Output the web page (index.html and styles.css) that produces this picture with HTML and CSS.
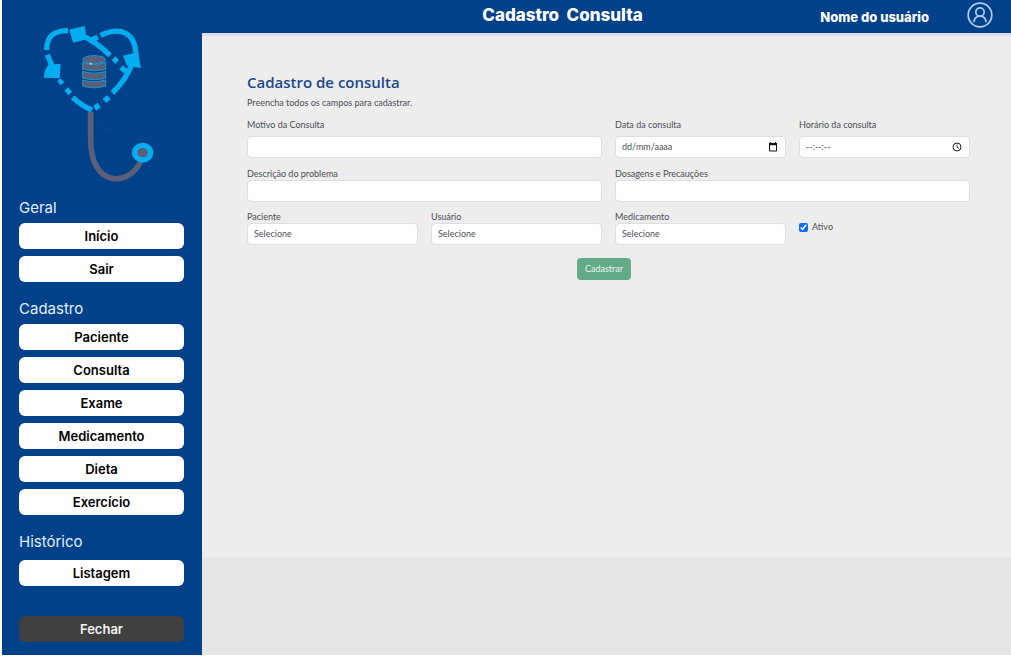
FILE: index.html
```html
<!DOCTYPE html>
<html lang="pt-BR">
<head>
<meta charset="utf-8">
<meta name="viewport" content="width=device-width, initial-scale=1">
<title>Cadastro Consulta</title>
<link rel="stylesheet" href="styles.css">
</head>
<body>
<div class="app">
  <aside class="sidebar">
    <svg class="logo" viewBox="-3 0 495 540" role="img" aria-label="Logotipo">
      <g fill="none" stroke="#03adef" stroke-width="16">
        <path d="M80 120C80 80 98 62 144 62"/>
        <path d="M82 134L98 172"/>
        <path d="M180 73C212 88 244 110 270 136"/>
        <path d="M207 94L233 81"/>
        <path d="M242 76C300 48 348 66 348 140"/>
        <path d="M338 156C325 195 303 224 277 249"/>
        <path d="M303 172L318 184"/>
        <path d="M158 262C174 277 192 290 216 300"/>
      </g>
      <g fill="#03adef">
        <path d="M147 59L194 48 200 88 160 98Z"/>
        <path d="M309 137L354 127 363 174 321 167Z"/>
        <path d="M76 178L86 163 122 162 119 205 71 203Z"/>
        <path d="M275 151L286 139 297 150 286 162Z"/>
        <path d="M112 214L122 205 133 217 122 226Z"/>
        <path d="M133 242L144 232 156 245 146 256Z"/>
        <path d="M220 289L232 278 243 291 229 302Z"/>
        <path d="M248 267L261 256 272 268 259 279Z"/>
      </g>
      <g fill="#5b6078" stroke="#1997cd" stroke-width="3">
        <path d="M188 210Q222 220 257 210V228Q222 239 188 228Z"/>
        <path d="M188 184Q222 195 257 184V204Q222 214 188 204Z"/>
        <path d="M188 157Q222 170 257 157V178Q222 187 188 178Z"/>
        <ellipse cx="222" cy="149" rx="34" ry="12"/>
      </g>
      <circle cx="212" cy="161" r="3" fill="#b9efff"/>
      <path d="M212 306V390C212 535 330 530 362 453" fill="none" stroke="#5b6078" stroke-width="17"/>
      <ellipse cx="368" cy="428" rx="24" ry="22" fill="#5b6078" stroke="#03adef" stroke-width="16"/>
      <path d="M236 344V356M255 350L257 360M267 356L271 364" fill="none" stroke="#174c91" stroke-width="3"/>
    </svg>
    <nav class="menu" aria-label="Principal">
      <section class="group">
        <h2 class="group-title">Geral</h2>
        <button class="item" type="button">Início</button>
        <button class="item" type="button">Sair</button>
      </section>
      <section class="group">
        <h2 class="group-title">Cadastro</h2>
        <button class="item" type="button">Paciente</button>
        <button class="item" type="button">Consulta</button>
        <button class="item" type="button">Exame</button>
        <button class="item" type="button">Medicamento</button>
        <button class="item" type="button">Dieta</button>
        <button class="item" type="button">Exercício</button>
      </section>
      <section class="group group-history">
        <h2 class="group-title">Histórico</h2>
        <button class="item" type="button">Listagem</button>
      </section>
    </nav>
    <button class="item item-close" type="button">Fechar</button>
  </aside>
  <div class="page">
    <header class="topbar">
      <h1 class="page-title">Cadastro&nbsp; Consulta</h1>
      <div class="user">
        <span class="user-name">Nome do usuário</span>
        <svg class="avatar" viewBox="0 0 26 26" fill="none" stroke="#b3ccf2" stroke-width="1.7" aria-hidden="true">
          <circle cx="13" cy="13" r="11.8"/>
          <circle cx="13" cy="10" r="4.2"/>
          <path d="M6.8 20.2C7.4 16.5 9.5 14.2 13 14.2S18.600 16.500 19.200 20.200"/>
        </svg>
      </div>
    </header>
    <main class="content">
      <form class="form">
        <h2 class="form-title">Cadastro de consulta</h2>
        <p class="form-hint">Preencha todos os campos para cadastrar.</p>
        <div class="row row-first">
          <div class="field wide">
            <label for="motivo">Motivo da Consulta</label>
            <input class="control" id="motivo" type="text">
          </div>
          <div class="field">
            <label for="data">Data da consulta</label>
            <div class="control picker">
              <input class="picker-input" id="data" type="text" placeholder="dd/mm/aaaa">
              <svg class="picker-icon" viewBox="0 0 10 10" aria-hidden="true">
                <path d="M1.500 1.500H8.500V9H1.500Z" fill="none" stroke="#111"/>
                <path d="M1 1H9V3.200H1ZM2.200 0H3.200V2H2.200ZM6.800 0H7.800V2H6.800Z" fill="#111"/>
              </svg>
            </div>
          </div>
          <div class="field">
            <label for="hora">Horário da consulta</label>
            <div class="control picker">
              <input class="picker-input" id="hora" type="text" placeholder="--:--:--">
              <svg class="picker-icon" viewBox="0 0 10 10" fill="none" stroke="#222" aria-hidden="true">
                <circle cx="5" cy="5" r="4"/>
                <path d="M5 2.500V5.200L6.800 6.300" stroke-width=".9"/>
              </svg>
            </div>
          </div>
        </div>
        <div class="row">
          <div class="field wide">
            <label for="descricao">Descrição do problema</label>
            <input class="control" id="descricao" type="text">
          </div>
          <div class="field wide">
            <label for="dosagens">Dosagens e Precauções</label>
            <input class="control" id="dosagens" type="text">
          </div>
        </div>
        <div class="row row-last">
          <div class="field">
            <label for="paciente">Paciente</label>
            <select class="control" id="paciente"><option>Selecione</option></select>
          </div>
          <div class="field">
            <label for="usuario">Usuário</label>
            <select class="control" id="usuario"><option>Selecione</option></select>
          </div>
          <div class="field">
            <label for="medicamento">Medicamento</label>
            <select class="control" id="medicamento"><option>Selecione</option></select>
          </div>
          <div class="check">
            <input class="check-box" id="ativo" type="checkbox" checked>
            <label for="ativo">Ativo</label>
          </div>
        </div>
        <button class="submit" type="submit">Cadastrar</button>
      </form>
    </main>
    <footer class="footer"></footer>
  </div>
</div>
</body>
</html>
```
FILE: styles.css
```css
* {
  box-sizing: border-box;
}

body {
  margin: 0;
  background: #fff;
  font-family: Inter, "Liberation Sans", sans-serif;
}

h1, h2, p {
  margin: 0;
}

.app {
  display: grid;
  grid-template-columns: 200px 1fr;
  min-height: 100vh;
  padding: 0 0 1px 2px;
}

.sidebar {
  display: flex;
  flex-direction: column;
  padding: 10px 18px 13px 17px;
  background: #004189;
}

.logo {
  display: block;
  width: 100%;
}

.menu {
  display: flex;
  flex-direction: column;
  gap: 19px;
  padding-top: 10px;
}

.group {
  display: flex;
  flex-direction: column;
  gap: 7px;
}

.group-title {
  color: #e6effb;
  font-size: 15px;
  font-weight: 400;
  line-height: 16px;
}

.group-history {
  gap: 10px;
}

.item {
  height: 26px;
  padding: 0;
  border: 0;
  border-radius: 6px;
  background: #fff;
  color: #000;
  font: 600 13px/26px Inter, "Liberation Sans", sans-serif;
}

.item-close {
  margin-top: auto;
  background: #404040;
  color: #f2f2f2;
}

.page {
  display: flex;
  flex-direction: column;
}

.topbar {
  display: grid;
  grid-template-columns: 1fr auto 1fr;
  align-items: center;
  height: 33px;
  padding: 0 18px 3px 0;
  background: #004189;
  color: #fff;
}

.page-title {
  grid-column: 2;
  padding-right: 70px;
  font-size: 17px;
  font-weight: 800;
  line-height: 20px;
}

.user {
  display: flex;
  align-items: center;
  justify-content: flex-end;
  gap: 38px;
}

.user-name {
  padding-top: 3px;
  font-size: 13px;
  font-weight: 800;
  line-height: 16px;
  white-space: nowrap;
}

.avatar {
  width: 26px;
  height: 26px;
}

.content {
  flex: 1;
  padding: 36px 41px 0 45px;
  border-top: 3px solid #dcdde8;
  background: #ededed;
}

.footer {
  height: 98px;
  background: #e6e6e6;
}

.form {
  display: flex;
  flex-direction: column;
  color: #4b4f56;
  font: 9px/12px Lato, "Open Sans", sans-serif;
}

.form-title {
  color: #1b478a;
  font: 600 15px/20px "Open Sans", "Noto Sans", sans-serif;
}

.form-hint {
  padding-top: 5px;
}

.row {
  display: grid;
  grid-template-columns: repeat(4, 1fr);
  gap: 13px;
  padding-top: 10px;
}

.row-last {
  padding-top: 9px;
}

.wide {
  grid-column: span 2;
}

.field {
  display: flex;
  flex-direction: column;
}

.row-first .field {
  gap: 5px;
}

.control {
  width: 100%;
  height: 22px;
  padding: 0 6px;
  border: 1px solid #dcdfe3;
  border-radius: 4px;
  background: #fff;
  color: #4b4f56;
  font: inherit;
  appearance: none;
}

.picker {
  display: flex;
  align-items: center;
  padding-right: 7px;
}

.picker-input {
  flex: 1;
  min-width: 0;
  padding: 0;
  border: 0;
  background: none;
  font: inherit;
}

.picker-input::placeholder {
  color: #4b4f56;
  opacity: 1;
}

.picker-icon {
  width: 10px;
  height: 10px;
}

.check {
  display: flex;
  align-items: center;
  gap: 4px;
  padding-bottom: 2px;
}

.check-box {
  width: 9px;
  height: 9px;
  margin: 0;
  accent-color: #0d6efd;
}

.submit {
  align-self: center;
  height: 22px;
  margin: 13px 9px 0 0;
  padding: 0 8px;
  border: 0;
  border-radius: 4px;
  background: #63aa88;
  color: #eaf6f0;
  font: inherit;
}
```
